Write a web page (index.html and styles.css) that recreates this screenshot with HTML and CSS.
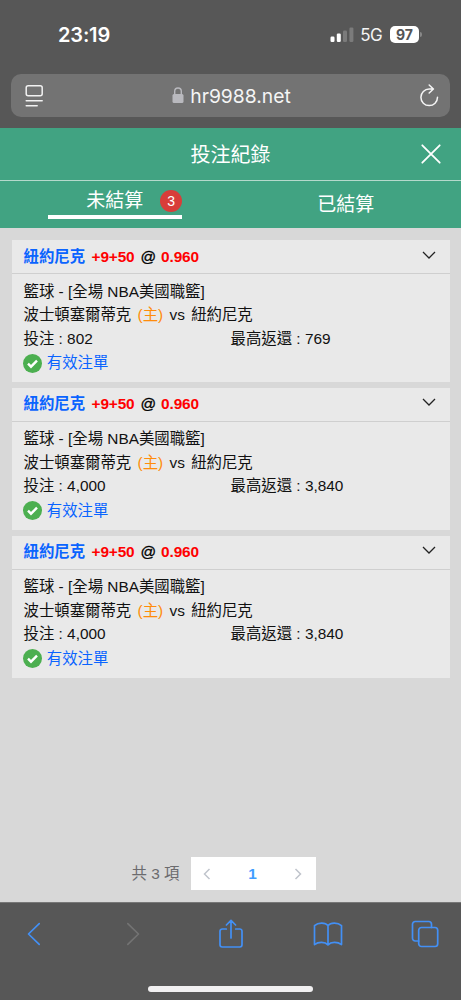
FILE: index.html
```
<!DOCTYPE html>
<html lang="zh-Hant">
<head>
<meta charset="utf-8">
<meta name="viewport" content="width=device-width, initial-scale=1">
<title>投注紀錄</title>
<link rel="stylesheet" href="styles.css">
</head>
<body>
<div class="phone">
  <header class="browser-top">
    <div class="status">
      <span class="time">23:19</span>
      <div class="status-right">
        <svg class="signal" width="24" height="16" viewBox="0 0 24 16"><rect x="0.5" y="9.5" width="4" height="5.5" rx="1.2" fill="#fff"/><rect x="6.8" y="6.5" width="4" height="8.500" rx="1.2" fill="#fff"/><rect x="13" y="3.5" width="4" height="11.5" rx="1.2" fill="#7b7b7b"/><rect x="19.4" y="0.5" width="4" height="14.5" rx="1.2" fill="#7b7b7b"/></svg>
        <span class="network">5G</span>
        <span class="battery">97</span><i class="battery-tip"></i>
      </div>
    </div>
    <div class="address">
      <svg width="20" height="24" viewBox="0 0 20 24" fill="none" stroke="#f2f2f2" stroke-width="1.5" stroke-linecap="round"><rect x="2.2" y="1.8" width="16" height="10" rx="2"/><path d="M2.2 16.800h16M2.2 21.800h11"/></svg>
      <div class="url">
        <svg width="12" height="18" viewBox="0 0 12 18"><rect x="0.5" y="7" width="11" height="9" rx="1.5" fill="#b9b9be"/><path d="M2.7 7.500V4.300a3.300 3.300 0 0 1 6.600 0V7.500" fill="none" stroke="#b9b9be" stroke-width="1.4"/></svg>
        <span>hr9988.net</span>
      </div>
      <svg width="20" height="24" viewBox="0 0 20 24" fill="none" stroke="#f5f5f5" stroke-width="1.5" stroke-linecap="round" stroke-linejoin="round"><path d="M18.500 13.300A8.300 8.300 0 1 1 10.200 5H14.200M10.200 1l4.200 4-4.200 4"/></svg>
    </div>
  </header>

  <div class="title-bar">
    <h1>投注紀錄</h1>
    <svg class="close" width="20" height="20" viewBox="0 0 20 20" fill="none" stroke="#fff" stroke-width="1.8" stroke-linecap="round"><path d="M1.3 1.3l17.4 17.4M18.7 1.3L1.3 18.7"/></svg>
  </div>
  <nav class="tabs">
    <div class="tab"><div class="tab-active"><span>未結算</span><b class="count">3</b></div></div>
    <div class="tab"><span class="tab-label">已結算</span></div>
  </nav>

  <main class="content">
    <section class="card">
      <div class="card-head"><span class="team">紐約尼克</span><span class="odds">+9+50</span><span class="at">@</span><span class="odds">0.960</span><svg class="chevron" width="14" height="9" viewBox="0 0 14 9"><path d="M1 1l6 6 6-6"/></svg></div>
      <div class="card-body">
        <p class="line">籃球 - [全場 NBA美國職籃]</p>
        <p class="line match"><span>波士頓塞爾蒂克</span><span class="home">(主)</span><span>vs</span><span>紐約尼克</span></p>
        <p class="line money"><span>投注 : 802</span><span>最高返還 : 769</span></p>
        <p class="valid"><svg width="19" height="19" viewBox="0 0 19 19"><circle cx="9.5" cy="9.5" r="9.5" fill="#4caf50"/><path class="tick" d="M5 9.700l3 3 6-6"/></svg>有效注單</p>
      </div>
    </section>
    <section class="card">
      <div class="card-head"><span class="team">紐約尼克</span><span class="odds">+9+50</span><span class="at">@</span><span class="odds">0.960</span><svg class="chevron" width="14" height="9" viewBox="0 0 14 9"><path d="M1 1l6 6 6-6"/></svg></div>
      <div class="card-body">
        <p class="line">籃球 - [全場 NBA美國職籃]</p>
        <p class="line match"><span>波士頓塞爾蒂克</span><span class="home">(主)</span><span>vs</span><span>紐約尼克</span></p>
        <p class="line money"><span>投注 : 4,000</span><span>最高返還 : 3,840</span></p>
        <p class="valid"><svg width="19" height="19" viewBox="0 0 19 19"><circle cx="9.5" cy="9.5" r="9.5" fill="#4caf50"/><path class="tick" d="M5 9.700l3 3 6-6"/></svg>有效注單</p>
      </div>
    </section>
    <section class="card">
      <div class="card-head"><span class="team">紐約尼克</span><span class="odds">+9+50</span><span class="at">@</span><span class="odds">0.960</span><svg class="chevron" width="14" height="9" viewBox="0 0 14 9"><path d="M1 1l6 6 6-6"/></svg></div>
      <div class="card-body">
        <p class="line">籃球 - [全場 NBA美國職籃]</p>
        <p class="line match"><span>波士頓塞爾蒂克</span><span class="home">(主)</span><span>vs</span><span>紐約尼克</span></p>
        <p class="line money"><span>投注 : 4,000</span><span>最高返還 : 3,840</span></p>
        <p class="valid"><svg width="19" height="19" viewBox="0 0 19 19"><circle cx="9.5" cy="9.5" r="9.5" fill="#4caf50"/><path class="tick" d="M5 9.700l3 3 6-6"/></svg>有效注單</p>
      </div>
    </section>
    <div class="pagination">
      <span class="total">共 3 項</span>
      <div class="pager">
        <svg width="8" height="12" viewBox="0 0 8 12"><path d="M6.5 1L1.5 6l5 5"/></svg>
        <b>1</b>
        <svg width="8" height="12" viewBox="0 0 8 12"><path d="M1.5 1l5 5-5 5"/></svg>
      </div>
    </div>
  </main>

  <footer class="toolbar">
    <div class="tools">
      <svg width="14" height="24" viewBox="0 0 14 24"><path d="M12.2 1.7L1.5 12l10.700 10.300"/></svg>
      <svg class="disabled" width="14" height="24" viewBox="0 0 14 24"><path d="M1.8 1.7L12.5 12 1.8 22.300"/></svg>
      <svg width="26" height="30" viewBox="0 0 26 30"><path d="M8.300 10H4.200a2.200 2.200 0 0 0-2.200 2.200v13.600A2.200 2.200 0 0 0 4.200 28h17.600a2.200 2.200 0 0 0 2.200-2.200V12.200a2.200 2.200 0 0 0-2.200-2.200h-4.100M13 19V1.500M8.400 6L13 1.400 17.600 6"/></svg>
      <svg width="30" height="26" viewBox="0 0 30 26"><path d="M15 4.600C12.500 1.400 5.500 1 1.500 4.600v19c4-3 10.500-3 13.500.3 3-3.300 9.500-3.300 13.500-.3v-19C24.500 1 17.500 1.400 15 4.600zV23.500"/></svg>
      <svg width="28" height="28" viewBox="0 0 28 28"><path d="M7.700 21H4.200a2.700 2.700 0 0 1-2.700-2.700V4.200a2.700 2.700 0 0 1 2.700-2.700h13.600a2.700 2.700 0 0 1 2.700 2.700v3.300"/><rect x="7.700" y="7.500" width="19" height="19" rx="2.700"/></svg>
    </div>
    <div class="home-indicator"></div>
  </footer>
</div>
</body>
</html>
```
FILE: styles.css
```
* { box-sizing: border-box; }
body, p, h1 { margin: 0; }
body { background: #d8d8d8; }
svg { display: block; flex: none; }
.phone {
  width: 461px;
  height: 1000px;
  display: flex;
  flex-direction: column;
  overflow: hidden;
  background: #d8d8d8;
  font-family: "Liberation Sans", "Noto Sans CJK TC", sans-serif;
  color: #111;
}

/* Browser chrome */
.browser-top { height: 128px; flex: none; background: #575757; padding: 20px 11px 0; color: #fff; font-family: Inter, sans-serif; }
.status { height: 29px; display: flex; justify-content: space-between; align-items: center; padding: 0 28px 0 47px; }
.time { font-size: 20px; font-weight: 600; line-height: 28px; letter-spacing: -0.15px; }
.status-right { display: flex; align-items: center; }
.network { font-size: 17px; margin-left: 6px; letter-spacing: -0.6px; color: #f4f4f4; }
.battery { width: 29px; height: 17px; margin-left: 8px; border-radius: 5px; background: #fff; color: #555; font-size: 14px; font-weight: 700; line-height: 17px; text-align: center; }
.battery-tip { width: 2px; height: 5px; margin-left: 1px; border-radius: 0 2px 2px 0; background: #888; }
.address { height: 43px; margin-top: 25px; padding: 0 11px 0 13px; border-radius: 10px; background: #737373; display: flex; align-items: center; justify-content: space-between; }
.url { display: flex; align-items: center; gap: 6px; font-size: 19.300px; color: #f5f5f5; }

/* Page header */
.title-bar { height: 53px; flex: none; background: #41a382; border-bottom: 1px solid #b5d9cc; display: grid; grid-template-columns: 1fr auto 1fr; align-items: center; color: #fff; }
.title-bar h1 { grid-column: 2; font-size: 20px; font-weight: 400; line-height: 30px; padding-top: 1px; }
.close { justify-self: end; margin-right: 20px; }
.tabs { height: 47px; flex: none; background: #41a382; display: grid; grid-template-columns: 1fr 1fr; color: #fff; font-size: 19px; }
.tab { display: flex; justify-content: center; }
.tab-active { width: 134px; height: 38px; border-bottom: 4px solid #fff; display: flex; align-items: center; justify-content: space-between; padding-left: 38px; padding-top: 6px; line-height: 28px; }
.count { width: 22px; height: 22px; border-radius: 50%; background: #d83d39; font-size: 14px; font-weight: 400; line-height: 22px; text-align: center; }
.tab-label { line-height: 47px; }

/* Bet list */
.content { flex: 1; display: flex; flex-direction: column; padding: 12px 11.500px 12px; }
.card { height: 142px; margin-bottom: 5.800px; flex: none; background: #e9e9e9; font-size: 15.400px; }
.card-head { height: 34px; border-bottom: 1px solid #cfcfcf; padding: 0 14px 0 12px; display: flex; align-items: center; font-weight: 700; line-height: 24px; }
.team { color: #0a64ff; margin-right: 6.500px; }
.odds { color: #f00; letter-spacing: -0.15px; }
.at { margin: 0 5px 0 6px; color: #000; font-weight: 400; -webkit-text-stroke: 0.300px #000; }
.chevron { margin-left: auto; margin-bottom: 3px; }
.chevron path { fill: none; stroke: #222; stroke-width: 1.300; }
.card-body { padding: 5.500px 12px 0; }
.line { height: 23.500px; line-height: 23.500px; white-space: nowrap; }
.match { display: flex; gap: 6.300px; }
.home { color: #ff8c0a; }
.money { display: grid; grid-template-columns: 207px 1fr; }
.valid { height: 26px; display: flex; align-items: center; gap: 5px; margin-left: -0.700px; line-height: 24px; color: #0a64ff; }
.tick { fill: none; stroke: #fff; stroke-width: 2.400; }

.pagination { margin-top: auto; display: flex; align-items: center; padding-left: 120px; gap: 12px; }
.total { width: 47.500px; color: #6b6b6e; font-size: 15.400px; line-height: 24px; white-space: pre; }
.pager { width: 125px; height: 33px; background: #fff; display: flex; align-items: center; justify-content: space-between; padding: 0 14px 0 12px; color: #409eff; font-size: 15.400px; }
.pager path { fill: none; stroke: #c0c4cc; stroke-width: 1.500; }

/* Bottom toolbar */
.toolbar { height: 98px; flex: none; background: #575757; border-top: 1px solid #777; }
.tools { height: 62px; margin: 0 -13px 0 -15px; display: grid; grid-template-columns: 97.500px 100px 96.500px 97.500px 97.500px; align-items: center; justify-items: center; }
.tools path, .tools rect { fill: none; stroke: #4390f5; stroke-width: 1.700; stroke-linecap: round; stroke-linejoin: round; }
.tools .disabled path { stroke: #737373; }
.home-indicator { width: 165px; height: 6px; margin: 21px auto 0; border-radius: 3px; background: #f1f0f1; }
```
